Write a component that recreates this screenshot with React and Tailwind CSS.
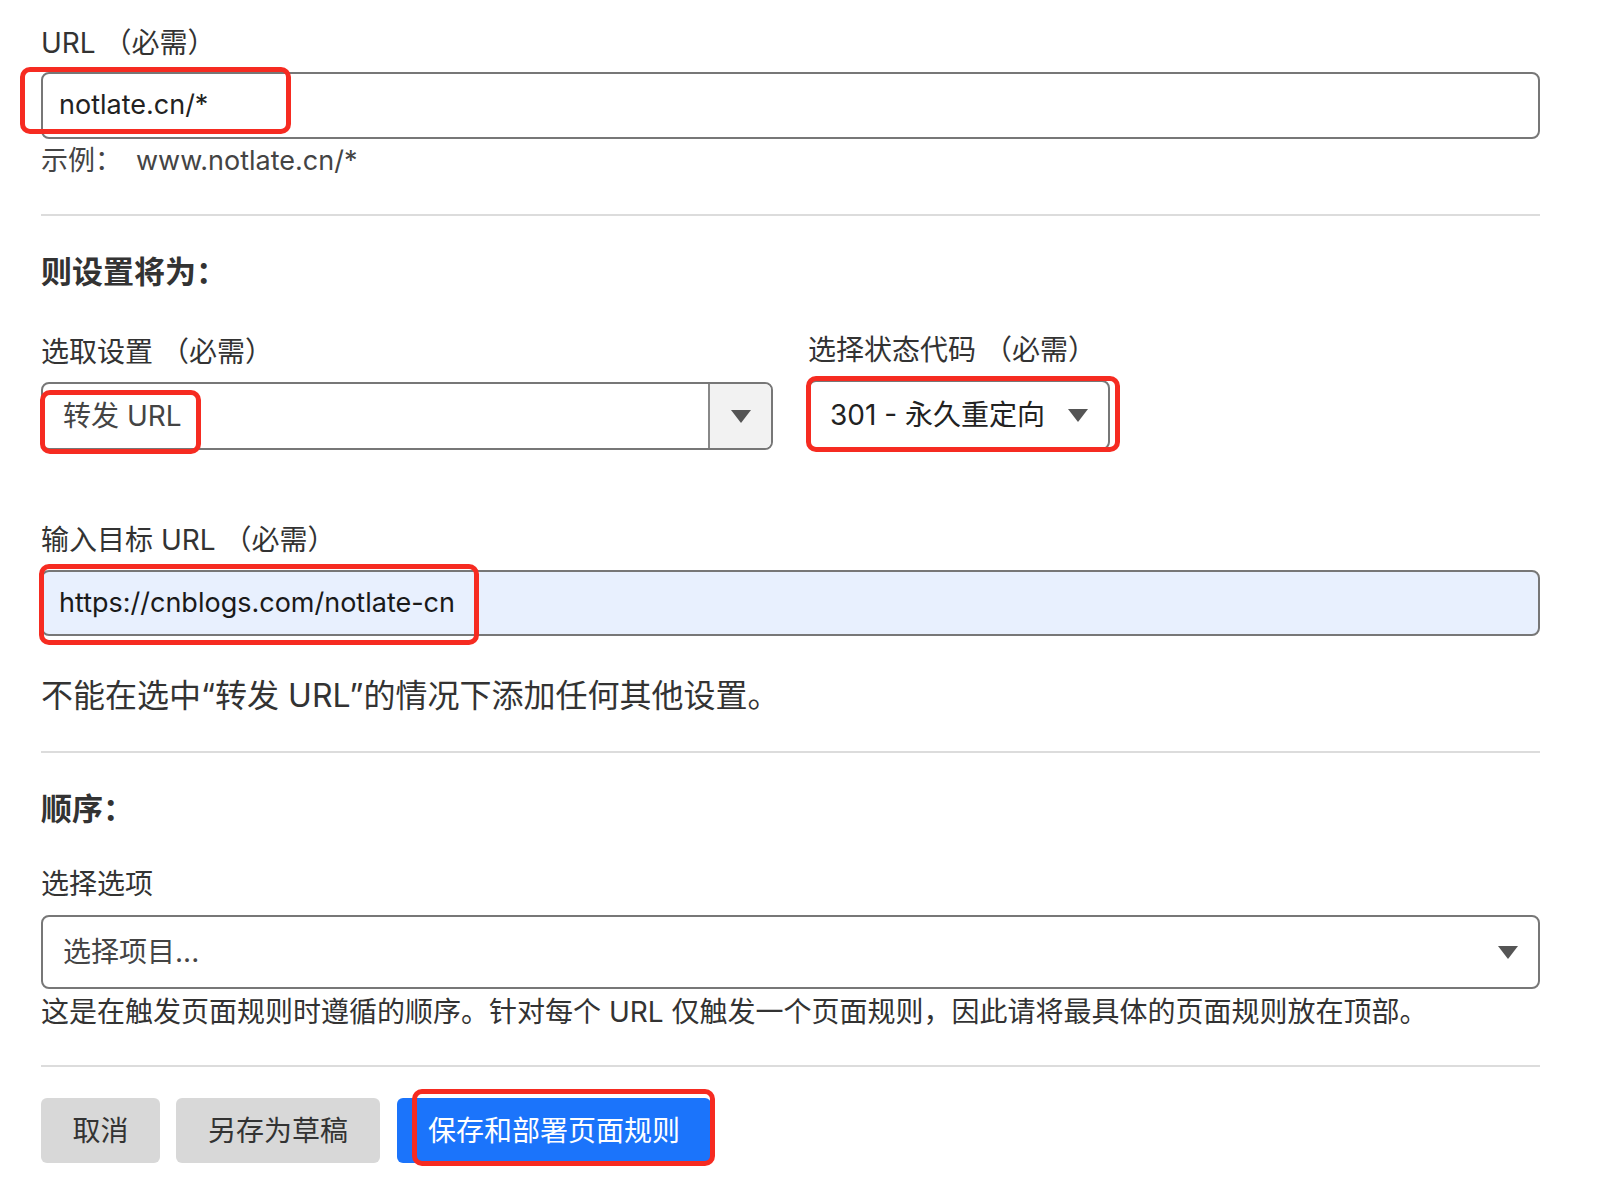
import React from "react";

// 页面规则编辑表单（带红框标注）
const Caret = ({ className = "" }) => (
  <svg width="20" height="13" viewBox="0 0 20 13" className={className}>
    <polygon points="0,0 20,0 10,13" fill="#555555" />
  </svg>
);

const Mark = ({ className }) => (
  <div className={`pointer-events-none absolute rounded-[10px] border-[5px] border-[#f62b21] ${className}`} />
);

const Label = ({ children, className = "" }) => (
  <div className={`text-[28px] leading-[30px] text-[#333333] ${className}`}>{children}</div>
);

const Divider = ({ className = "" }) => <div className={`h-[2px] bg-[#dcdcdc] ${className}`} />;

export default function App() {
  return (
    <div className="min-h-[1194px] bg-white font-['Inter','Noto_Sans_CJK_SC',sans-serif] text-[#333333]">
      <div className="ml-[41px] w-[1499px] pt-[28px]">
        <Label>URL （必需）</Label>
        <div className="relative mt-[14px] flex h-[67px] items-center rounded-lg border-2 border-[#777777] bg-white px-[16px] text-[27px] text-[#222222]">
          notlate.cn/*
          <Mark className="left-[-23px] top-[-7px] h-[67px] w-[271px]" />
        </div>
        <div className="mt-[7px] text-[27px] leading-[30px] text-[#444444]">
          示例：<span className="ml-[14px]">www.notlate.cn/*</span>
        </div>

        <Divider className="mt-[38px]" />

        <h2 className="mt-[39px] text-[31px] font-bold leading-[34px] text-[#333333]">则设置将为：</h2>

        <div className="mt-[48px] flex gap-[35px]">
          <div className="w-[732px]">
            <Label>选取设置 （必需）</Label>
            <div className="relative mt-[15px] flex h-[68px] items-stretch rounded-lg border-2 border-[#777777] bg-white">
              <div className="flex flex-1 items-center pl-[20px] text-[28px] text-[#444444]">转发 URL</div>
              <div className="flex w-[63px] items-center justify-center rounded-r-md border-l-2 border-[#888888] bg-[#f2f2f2]">
                <Caret />
              </div>
              <Mark className="left-[-3px] top-[6px] h-[64px] w-[161px]" />
            </div>
          </div>
          <div className="w-[302px]">
            <Label className="-mt-[2px]">选择状态代码 （必需）</Label>
            <div className="relative mt-[15px] flex h-[70px] items-center justify-between rounded-lg border-2 border-[#777777] bg-white pl-[20px] pr-[20px] text-[28px] text-[#222222]">
              <span>301 - 永久重定向</span>
              <Caret />
              <Mark className="left-[-4px] top-[-6px] h-[76px] w-[314px]" />
            </div>
          </div>
        </div>

        <Label className="mt-[75px]">输入目标 URL （必需）</Label>
        <div className="relative mt-[15px] flex h-[66px] items-center rounded-lg border-2 border-[#777777] bg-[#e8f0fe] px-[16px] text-[27px] text-[#1a1a1a]">
          https://cnblogs.com/notlate-cn
          <Mark className="left-[-4px] top-[-8px] h-[81px] w-[440px]" />
        </div>

        <p className="mt-[40px] text-[32px] leading-[40px] text-[#333333]">不能在选中“转发 URL”的情况下添加任何其他设置。</p>

        <Divider className="mt-[35px]" />

        <h2 className="mt-[39px] text-[31px] font-bold leading-[34px] text-[#333333]">顺序：</h2>

        <Label className="mt-[43px]">选择选项</Label>
        <div className="mt-[16px] flex h-[74px] items-center justify-between rounded-lg border-2 border-[#777777] bg-white pl-[20px] pr-[20px] text-[28px] text-[#444444]">
          <span>选择项目...</span>
          <Caret />
        </div>
        <div className="mt-[8px] text-[28px] leading-[30px] text-[#333333]">
          这是在触发页面规则时遵循的顺序。针对每个 URL 仅触发一个页面规则，因此请将最具体的页面规则放在顶部。
        </div>

        <Divider className="mt-[38px]" />

        <div className="mt-[31px] flex">
          <button className="h-[65px] w-[119px] rounded-md bg-[#d8d8d8] text-[28px] text-[#333333]">取消</button>
          <button className="ml-[16px] h-[65px] w-[204px] rounded-md bg-[#d8d8d8] text-[28px] text-[#333333]">另存为草稿</button>
          <button className="relative ml-[17px] h-[65px] w-[314px] rounded-md bg-[#1b74fb] text-[28px] text-white">
            保存和部署页面规则
            <Mark className="left-[15px] top-[-9px] h-[77px] w-[303px]" />
          </button>
        </div>
      </div>
    </div>
  );
}
